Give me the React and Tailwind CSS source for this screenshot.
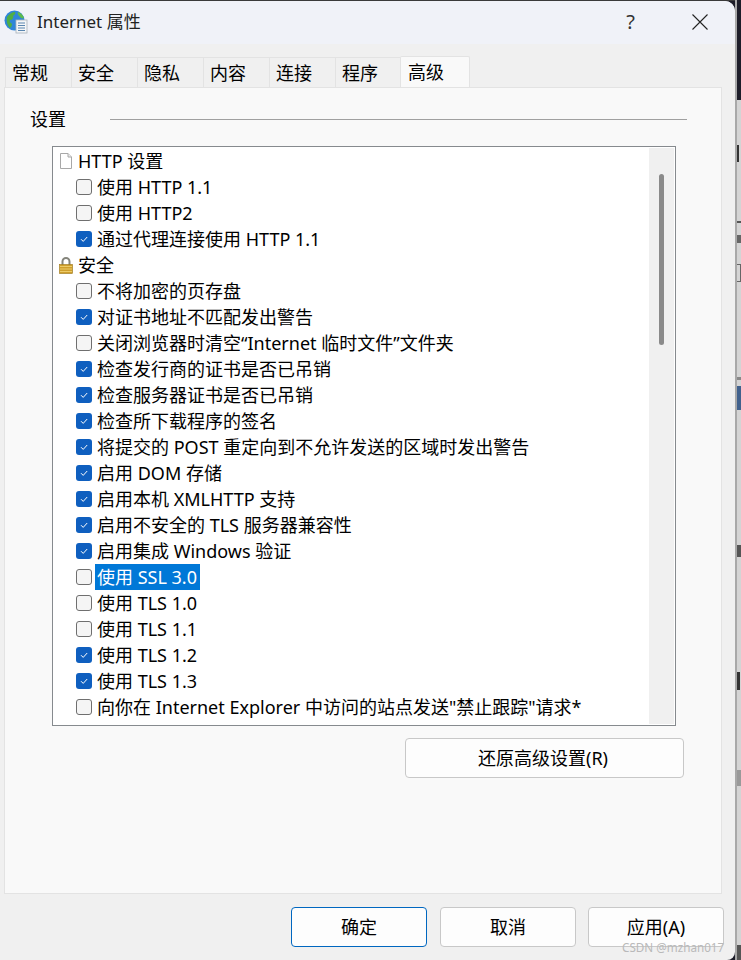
const rows = [
  { type: 'doc', label: 'HTTP 设置' },
  { label: '使用 HTTP 1.1' },
  { label: '使用 HTTP2' },
  { label: '通过代理连接使用 HTTP 1.1', checked: true },
  { type: 'lock', label: '安全' },
  { label: '不将加密的页存盘' },
  { label: '对证书地址不匹配发出警告', checked: true },
  { label: '关闭浏览器时清空“Internet 临时文件”文件夹' },
  { label: '检查发行商的证书是否已吊销', checked: true },
  { label: '检查服务器证书是否已吊销', checked: true },
  { label: '检查所下载程序的签名', checked: true },
  { label: '将提交的 POST 重定向到不允许发送的区域时发出警告', checked: true },
  { label: '启用 DOM 存储', checked: true },
  { label: '启用本机 XMLHTTP 支持', checked: true },
  { label: '启用不安全的 TLS 服务器兼容性', checked: true },
  { label: '启用集成 Windows 验证', checked: true },
  { label: '使用 SSL 3.0', selected: true },
  { label: '使用 TLS 1.0' },
  { label: '使用 TLS 1.1' },
  { label: '使用 TLS 1.2', checked: true },
  { label: '使用 TLS 1.3', checked: true },
  { label: '向你在 Internet Explorer 中访问的站点发送"禁止跟踪"请求*' },
]

const tabs = ['常规', '安全', '隐私', '内容', '连接', '程序']

function GlobeIcon() {
  return (
    <svg viewBox="0 0 24 24" className="h-6 w-6 shrink-0">
      <circle cx="10.5" cy="10.5" r="10" fill="#2f86d8" />
      <path d="M3 7c2-3 5-5 8-5 1 2-1 3-2 4 1 2-1 4-3 4-1 2 1 3 2 4 0 2-1 3-2 4-2-2-4-6-3-11Z" fill="#4fae45" />
      <path d="M14 2c3 1 5 3 6 6-2 1-3 0-4-1-1-1-3-3-2-5Z" fill="#5dbb4c" />
      <rect x="12" y="10" width="11" height="13" fill="#f4f6f8" stroke="#a9b2ba" strokeWidth="0.8" />
      <path d="M14 13h7M14 15.5h7M14 18h7M14 20.5h7" stroke="#5a86b0" strokeWidth="1" />
    </svg>
  )
}

function DocIcon() {
  return (
    <svg viewBox="0 0 14 16" className="h-4 w-[14px] shrink-0">
      <path d="M1.5.5h7.5l3.5 3.5v11.5h-11Z" fill="#fff" stroke="#a8a8a8" />
      <path d="M9 .5v3.5h3.5" fill="#ececec" stroke="#a8a8a8" />
    </svg>
  )
}

function LockIcon() {
  return (
    <svg viewBox="0 0 14 17" className="h-[17px] w-[14px] shrink-0">
      <path d="M3.5 8V4.5a3.5 3.5 0 0 1 7 0V8" fill="none" stroke="#85857c" strokeWidth="2" />
      <rect x="0.5" y="7.5" width="13" height="9" fill="#cf9f2c" stroke="#9c7619" strokeWidth="0.6" />
      <path d="M1 9.5h12M1 12h12M1 14.5h12" stroke="#eccb68" strokeWidth="1" />
    </svg>
  )
}

function CloseIcon() {
  return (
    <svg viewBox="0 0 16 16" className="h-4 w-4 shrink-0">
      <path d="M.5.5l15 15M15.5.5l-15 15" fill="none" stroke="#222" strokeWidth="1.1" />
    </svg>
  )
}

function CheckBox({ checked }) {
  if (checked) {
    return (
      <span className="flex h-4 w-4 shrink-0 items-center justify-center rounded-[3px] bg-[#0f5fbf]">
        <svg viewBox="0 0 10 10" className="h-2.5 w-2.5">
          <path d="M2 5.2 4.2 7.4 8.2 3" fill="none" stroke="#fff" strokeWidth="1" />
        </svg>
      </span>
    )
  }
  return <span className="h-4 w-4 shrink-0 rounded-[3px] border border-[#6f6f6f] bg-[#f5f5f5]" />
}

function TreeRow({ row }) {
  if (row.type) {
    return (
      <div className="flex h-[26px] items-center gap-[5px] pl-[6px]">
        {row.type === 'doc' ? <DocIcon /> : <LockIcon />}
        <span>{row.label}</span>
      </div>
    )
  }
  return (
    <div className="flex h-[26px] items-center pl-[23px]">
      <CheckBox checked={row.checked} />
      <span className={row.selected ? 'ml-[3px] bg-[#0078d7] pl-[2px] pr-[3px] text-white' : 'ml-[5px]'}>{row.label}</span>
    </div>
  )
}

function Button({ children, primary, className }) {
  return (
    <button
      type="button"
      className={`flex items-center justify-center rounded-[4px] border bg-[#fdfdfd] ${primary ? 'border-[#0067c0]' : 'border-[#c8c8c8]'} ${className}`}
    >
      {children}
    </button>
  )
}

// what shows of the desktop behind the dialog
function BackdropStrip() {
  return (
    <div className="absolute right-0 top-0 h-full w-[6px] overflow-hidden border-l-2 border-[#a8a8a8] bg-[#d4d4d4]">
      <div className="h-[100px] bg-[#1d1d29]" />
      <div className="absolute left-0 top-[145px] h-[17px] w-[2px] bg-[#333]" />
      <div className="absolute left-0 top-[221px] h-[2px] w-[4px] bg-[#555]" />
      <div className="absolute left-0 top-[235px] h-[8px] w-[4px] bg-[#666]" />
      <div className="absolute left-0 top-[264px] h-[18px] w-[4px] border border-l-0 border-[#666]" />
      <div className="absolute left-0 top-[377px] h-[3px] w-[4px] bg-[#888]" />
      <div className="absolute left-0 top-[386px] h-[24px] w-[4px] bg-[#41618d]" />
      <div className="absolute left-0 top-[545px] h-[12px] w-[4px] bg-[#555]" />
      <div className="absolute left-0 top-[672px] h-[18px] w-[3px] bg-[#333]" />
      <div className="absolute left-0 top-[770px] h-[16px] w-[4px] bg-[#999]" />
      <div className="absolute left-0 top-[945px] h-[15px] w-[4px] bg-[#555]" />
    </div>
  )
}

export default function App() {
  return (
    <div className="relative h-[960px] w-[741px] overflow-hidden bg-[#1d1d29] font-['Noto_Sans','Noto_Sans_CJK_SC',sans-serif] text-[18px] leading-[26px] text-black">
      <BackdropStrip />
      <div className="h-px bg-[#3a3a3a]" />
      <div className="relative flex h-[959px] w-[735px] flex-col rounded-tr-[10px] rounded-br-[8px] bg-[#f0f0f0]">
        <header className="flex h-[43px] shrink-0 items-center rounded-tr-[10px] bg-[#f0f2f8] pb-[1px] pl-[4px]">
          <GlobeIcon />
          <span className="ml-[9px] text-[17px] text-[#222]">Internet 属性</span>
          <span className="ml-auto mr-[57px] text-[20px] text-[#333]">?</span>
          <div className="mr-[27px]">
            <CloseIcon />
          </div>
        </header>

        <div className="flex h-[43px] shrink-0 items-end pl-[5px]">
          {tabs.map((tab) => (
            <div key={tab} className="-mr-px flex h-[30px] w-[67px] items-center border border-b-0 border-[#e3e3e3] bg-[#f0f0f0] pl-[6px]">
              {tab}
            </div>
          ))}
          <div className="z-10 -ml-px flex h-[31px] w-[70px] items-center rounded-t-[2px] border border-b-0 border-[#e3e3e3] bg-[#f9f9f9] pl-[7px]">
            高级
          </div>
        </div>

        <main className="ml-[4px] h-[807px] w-[718px] border border-[#e3e3e3] bg-[#f9f9f9] pl-[25px] pt-[18px]">
          <div className="flex h-[26px] items-center">
            <span>设置</span>
            <span className="ml-[44px] h-px w-[577px] bg-[#a0a0a0]" />
          </div>
          <div className="ml-[22px] mt-[14px] flex h-[580px] w-[624px] border border-[#868a8e] bg-white">
            <div className="h-full w-[596px] overflow-hidden pt-[1px]">
              {rows.map((row) => (
                <TreeRow key={row.label} row={row} />
              ))}
            </div>
            <div className="my-[1px] ml-auto mr-[1px] w-[25px] bg-[#f0f0f0] pl-[10px] pt-[26px]">
              <div className="h-[171px] w-[5px] rounded-full bg-[#8a8a8a]" />
            </div>
          </div>
          <Button className="ml-[375px] mt-[12px] h-[40px] w-[279px] pr-[3px]">还原高级设置(R)</Button>
        </main>

        <footer className="flex pl-[291px] pt-[13px]">
          <Button primary className="h-[40px] w-[136px]">确定</Button>
          <Button className="ml-[13px] h-[40px] w-[136px]">取消</Button>
          <Button className="ml-[12px] h-[40px] w-[136px]">应用(A)</Button>
        </footer>
      </div>
      <span className="absolute left-[622px] top-[938px] text-[11.7px] leading-[18px] text-[#b9b9b9]">CSDN @mzhan017</span>
    </div>
  )
}
